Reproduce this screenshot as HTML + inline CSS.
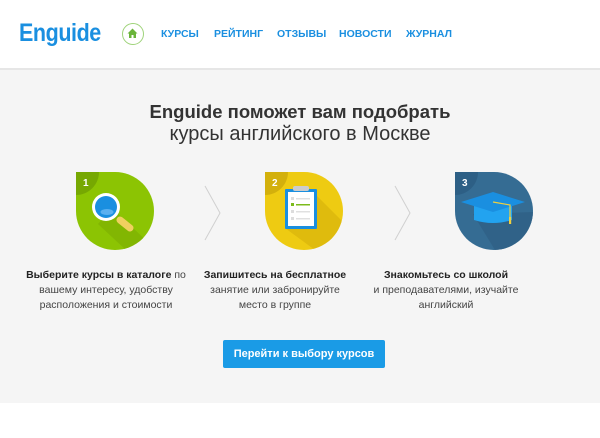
<!DOCTYPE html>
<html><head><meta charset="utf-8"><style>
*{margin:0;padding:0;box-sizing:border-box}
body{width:600px;height:438px;background:#fff;font-family:"Liberation Sans",sans-serif;position:relative;overflow:hidden}
.hdr{position:absolute;left:0;top:0;width:600px;height:70px;background:#fff;border-bottom:2px solid #e6e6e6}
.logo{position:absolute;left:19px;top:19px;font-size:25px;font-weight:bold;color:#1a8fe0;letter-spacing:-0.5px;transform:scaleX(0.86);transform-origin:left}
.home{position:absolute;left:122px;top:23px;width:22px;height:22px;border:1.5px solid #9fd37a;border-radius:50%}
.nav{position:absolute;top:28px;font-size:10.5px;font-weight:bold;color:#1a8fe0}
.main{position:absolute;left:0;top:70px;width:600px;height:333px;background:#f5f5f5}
.t1{position:absolute;left:0;width:600px;text-align:center;top:101px;font-size:18.5px;font-weight:bold;color:#333}
.t2{position:absolute;left:0;width:600px;text-align:center;top:123px;font-size:20px;color:#333}
.ic{position:absolute;top:172px}
.txt{position:absolute;top:268px;width:200px;text-align:center;font-size:10.5px;line-height:15px;color:#444}
.txt b{color:#222}
.btn{position:absolute;left:223px;top:340px;width:162px;height:28px;background:#1a9be6;color:#fff;font-size:11px;font-weight:bold;text-align:center;line-height:28px;border-radius:2px}
</style></head><body>
<div class="hdr">
<div class="logo">Enguide</div>
<div class="home"><svg width="19" height="19" viewBox="0 0 19 19"><path d="M9.5 4.5L4.5 9.5H6V14H8.5V11H10.5V14H13V9.5H14.5Z" fill="#6ab43a"/></svg></div>
<div class="nav" style="left:161px">КУРСЫ</div>
<div class="nav" style="left:214px">РЕЙТИНГ</div>
<div class="nav" style="left:277px">ОТЗЫВЫ</div>
<div class="nav" style="left:339px">НОВОСТИ</div>
<div class="nav" style="left:406px">ЖУРНАЛ</div>
</div>
<div class="main"></div>
<div class="t1">Enguide поможет вам подобрать</div>
<div class="t2">курсы английского в Москве</div>

<svg class="ic" style="left:76px" width="78" height="78" viewBox="0 0 78 78">
<defs><clipPath id="c1"><path d="M0 0H39A39 39 0 1 1 0 39Z"/></clipPath></defs>
<g clip-path="url(#c1)">
<rect width="78" height="78" fill="#8cc403"/>
<path d="M36 36L78 76V78H50L22 52Z" fill="#7cae02" opacity=".6"/>
<circle cx="0" cy="0" r="23" fill="#76a802"/>
</g>
<text x="7" y="14" font-size="10" font-weight="bold" fill="#fff" font-family="Liberation Sans">1</text>
<path d="M44 48L54 56" stroke="#f0d060" stroke-width="7" stroke-linecap="round"/>
<circle cx="30" cy="35" r="14" fill="#fff"/>
<circle cx="30" cy="35" r="11" fill="#1a8fe0"/>
<ellipse cx="31" cy="40" rx="6.5" ry="3" fill="#5ab0f0"/>
</svg>

<svg style="position:absolute;left:203px;top:185px" width="20" height="56"><path d="M2 1L17 28L2 55" stroke="#d0d0d0" fill="none" stroke-width="1"/></svg>
<svg style="position:absolute;left:393px;top:185px" width="20" height="56"><path d="M2 1L17 28L2 55" stroke="#d0d0d0" fill="none" stroke-width="1"/></svg>

<svg class="ic" style="left:265px" width="78" height="78" viewBox="0 0 78 78">
<defs><clipPath id="c2"><path d="M0 0H39A39 39 0 1 1 0 39Z"/></clipPath></defs>
<g clip-path="url(#c2)">
<rect width="78" height="78" fill="#eecb12"/>
<path d="M50 22L78 50V78H50L20 56Z" fill="#d8b30c" opacity=".7"/>
<circle cx="0" cy="0" r="23" fill="#d3b00c"/>
</g>
<text x="7" y="14" font-size="10" font-weight="bold" fill="#fff" font-family="Liberation Sans">2</text>
<rect x="20" y="17" width="32" height="40" rx="1" fill="#1a8fe0"/>
<rect x="23" y="20" width="26" height="34" fill="#fff"/>
<rect x="28" y="14" width="16" height="5" rx="2" fill="#ccc"/>
<rect x="26" y="25" width="3" height="3" fill="#ddd"/><rect x="31" y="26" width="14" height="1.5" fill="#e0e0e0"/>
<rect x="26" y="31" width="3" height="3" fill="#7cbb1c"/><rect x="31" y="32" width="14" height="1.5" fill="#7cbb1c"/>
<rect x="26" y="38" width="3" height="3" fill="#ddd"/><rect x="31" y="39" width="14" height="1.5" fill="#e0e0e0"/>
<rect x="26" y="45" width="3" height="3" fill="#ddd"/><rect x="31" y="46" width="14" height="1.5" fill="#e0e0e0"/>
</svg>

<svg class="ic" style="left:455px" width="78" height="78" viewBox="0 0 78 78">
<defs><clipPath id="c3"><path d="M0 0H39A39 39 0 1 1 0 39Z"/></clipPath></defs>
<g clip-path="url(#c3)">
<rect width="78" height="78" fill="#356c93"/>
<path d="M18 42L78 40V78H40Z" fill="#2f6086" opacity=".8"/>
<circle cx="0" cy="0" r="23" fill="#2d5f85"/>
</g>
<text x="7" y="14" font-size="10" font-weight="bold" fill="#fff" font-family="Liberation Sans">3</text>
<path d="M19 34V48Q38 54 57 48V34Z" fill="#22a3f0"/>
<path d="M6 30L38 20L70 30L38 40Z" fill="#1a8fe0"/>
<path d="M38 30L55 33V46" stroke="#f0d040" stroke-width="1.2" fill="none"/>
<rect x="54" y="45" width="2.2" height="7" fill="#f0d040"/>
</svg>

<div class="txt" style="left:6px"><b>Выберите курсы в каталоге</b> по<br>вашему интересу, удобству<br>расположения и стоимости</div>
<div class="txt" style="left:175px"><b>Запишитесь на бесплатное</b><br>занятие или забронируйте<br>место в группе</div>
<div class="txt" style="left:346px"><b>Знакомьтесь со школой</b><br>и преподавателями, изучайте<br>английский</div>
<div class="btn">Перейти к выбору курсов</div>
</body></html>
